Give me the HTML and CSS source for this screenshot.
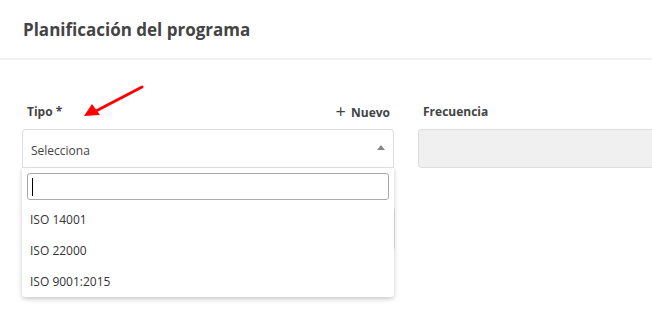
FILE: index.html
```html
<!DOCTYPE html>
<html lang="es">
<head>
    <meta charset="UTF-8">
    <meta name="viewport" content="width=device-width, initial-scale=1.0">
    <title>Planificación del programa</title>
    <link rel="stylesheet" href="styles.css">
</head>
<body>
    <div class="page-header">
        <h1>Planificación del programa</h1>
    </div>

    <form class="plan-form">
        <div class="field">
            <div class="field-label">
                <label for="tipo">Tipo *</label>
                <a class="add-link" href="#"><span class="plus">+</span> Nuevo</a>
            </div>
            <div class="select-wrap">
                <div class="select-box" id="tipo">
                    <span>Selecciona</span>
                    <span class="caret-up"></span>
                </div>
                <div class="dropdown">
                    <div class="search-box"><span class="text-cursor"></span></div>
                    <ul class="options">
                        <li>ISO 14001</li>
                        <li>ISO 22000</li>
                        <li>ISO 9001:2015</li>
                    </ul>
                </div>
            </div>
            <div class="hidden-field"></div>
        </div>

        <div class="field">
            <div class="field-label">
                <label for="frecuencia">Frecuencia</label>
            </div>
            <div class="input-disabled" id="frecuencia"></div>
        </div>
    </form>

    <svg class="annotation" width="70" height="40" viewBox="0 0 70 40">
        <line x1="62" y1="5" x2="16" y2="29" stroke="#ff0000" stroke-width="3" stroke-linecap="round"/>
        <polygon points="4,34 12,22 20,33" fill="#ff0000"/>
    </svg>
</body>
</html>
```

FILE: styles.css
```css
body {
    font-family: "Open Sans", "Noto Sans", sans-serif;
    margin: 0;
    min-height: 328px;
    background-color: #fff;
    color: #333;
}

.page-header {
    height: 60px;
    box-sizing: border-box;
    padding: 0 23px;
    border-bottom: 2px solid #f2f2f2;
    display: flex;
    align-items: center;
}

.page-header h1 {
    margin: 0;
    font-size: 17px;
    font-weight: 700;
    color: #444;
}

.plan-form {
    display: grid;
    grid-template-columns: 372px 1fr;
    column-gap: 24px;
    padding: 41px 0 0 22px;
}

.field-label {
    display: flex;
    justify-content: space-between;
    align-items: center;
    height: 20px;
    padding: 0 4px 0 5px;
    margin-bottom: 8px;
    font-size: 12px;
    font-weight: 700;
    color: #444;
}

.add-link {
    color: #444;
    text-decoration: none;
}

.add-link .plus {
    font-size: 18px;
    font-weight: 400;
    color: #444;
    vertical-align: -1px;
    margin-right: 2px;
}

.select-wrap {
    position: relative;
}

.select-box {
    height: 39px;
    box-sizing: border-box;
    border: 1px solid #ddd;
    border-bottom-color: #e6e6e6;
    border-radius: 4px 4px 0 0;
    display: flex;
    align-items: center;
    justify-content: space-between;
    padding: 3px 7px 0 8px;
    font-size: 12px;
    color: #444;
}

.caret-up {
    width: 0;
    height: 0;
    border-left: 4px solid transparent;
    border-right: 4px solid transparent;
    border-bottom: 5px solid #888;
    margin-right: 1px;
    margin-top: -5px;
}

.dropdown {
    position: absolute;
    top: 100%;
    left: 0;
    right: 0;
    z-index: 2;
    background-color: #fff;
    box-shadow: 0 2px 5px rgba(0, 0, 0, 0.22);
    border-radius: 0 0 3px 3px;
}

.search-box {
    margin: 5px 5px 4px;
    height: 27px;
    box-sizing: border-box;
    border: 1px solid #aaa;
    border-radius: 3px;
    display: flex;
    align-items: center;
    padding-left: 4px;
}

.text-cursor {
    width: 1px;
    height: 18px;
    background-color: #000;
}

.options {
    list-style: none;
    margin: 0;
    padding: 0;
}

.options li {
    height: 31px;
    line-height: 31px;
    padding-left: 8px;
    font-size: 12px;
    color: #333;
}

.hidden-field {
    margin-top: 38px;
    margin-right: -1px;
    height: 43px;
    border: 1px solid #e3e3e3;
    border-radius: 4px;
}

.input-disabled {
    height: 39px;
    box-sizing: border-box;
    background-color: #f0f0f0;
    border: 1px solid #ddd;
    border-radius: 4px 0 0 4px;
    border-right: none;
}

.annotation {
    position: absolute;
    left: 80px;
    top: 82px;
}
```
